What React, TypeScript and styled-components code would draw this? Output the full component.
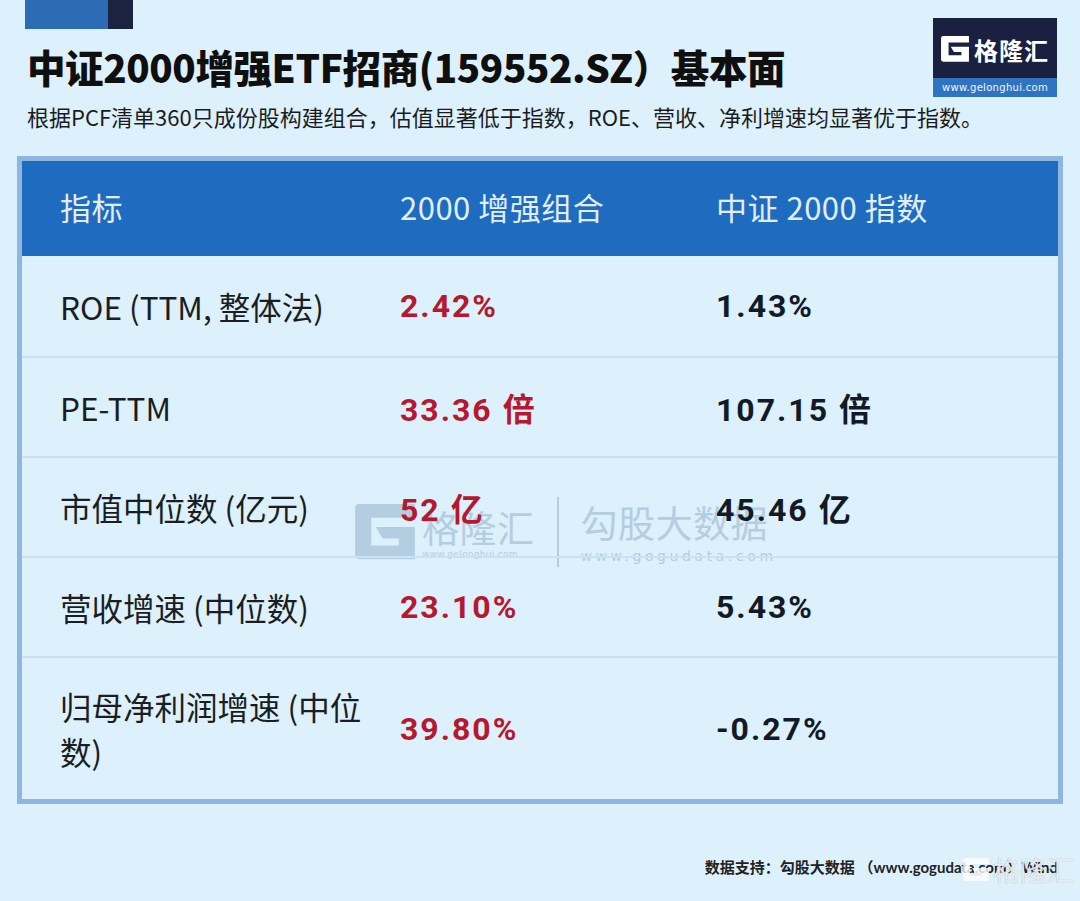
import styled, { createGlobalStyle } from 'styled-components'

type Row = {
  label: string
  ours: string
  index: string
}

const rows: Row[] = [
  { label: 'ROE (TTM, 整体法)', ours: '2.42%', index: '1.43%' },
  { label: 'PE-TTM', ours: '33.36 倍', index: '107.15 倍' },
  { label: '市值中位数 (亿元)', ours: '52 亿', index: '45.46 亿' },
  { label: '营收增速 (中位数)', ours: '23.10%', index: '5.43%' },
  { label: '归母净利润增速 (中位数)', ours: '39.80%', index: '-0.27%' },
]

const GlobalStyle = createGlobalStyle`
  html, body {
    margin: 0;
    padding: 0;
    background: #dcf1fc;
  }
  body {
    font-family: "Noto Sans CJK SC", "Noto Sans", sans-serif;
    color: #1a1a1a;
  }
  * {
    box-sizing: border-box;
  }
`

function GMark({ size, color }: { size: number; color: string }) {
  return (
    <svg width={size} height={size * 0.92} viewBox='0 0 26 24'>
      <path
        fill={color}
        d='M2 0 H26 V6 H7 V18 H19 V15 H12 L9 10 H26 V24 H2 Q0 24 0 22 V2 Q0 0 2 0 Z'
      />
    </svg>
  )
}

export default function App() {
  return (
    <Page>
      <GlobalStyle />
      <Header>
        <TitleBlock>
          <Deco>
            <DecoBlock $color='#2d6cb5' $width={83} />
            <DecoBlock $color='#1b2341' $width={25} />
          </Deco>
          <Title>中证2000增强ETF招商(159552.SZ）基本面</Title>
        </TitleBlock>
        <Logo>
          <LogoTop>
            <GMark size={28} color='#ffffff' />
            <span>格隆汇</span>
          </LogoTop>
          <LogoBar>www.gelonghui.com</LogoBar>
        </Logo>
        <Subtitle>
          根据PCF清单360只成份股构建组合，估值显著低于指数，ROE、营收、净利增速均显著优于指数。
        </Subtitle>
      </Header>

      <Table>
        <Watermark>
          <WmBrand>
            <GMark size={60} color='#a7c2d9' />
            <WmText>
              <span className='big'>格隆汇</span>
              <span className='small'>www.gelonghui.com</span>
            </WmText>
          </WmBrand>
          <WmDivider />
          <WmText>
            <span className='big'>勾股大数据</span>
            <span className='url'>www.gogudata.com</span>
          </WmText>
        </Watermark>

        <HeadRow>
          <HeadCell $first>指标</HeadCell>
          <HeadCell>2000 增强组合</HeadCell>
          <HeadCell>中证 2000 指数</HeadCell>
        </HeadRow>
        {rows.map((row, i) => (
          <BodyRow key={row.label} $tall={i === rows.length - 1} $first={i === 0}>
            <LabelCell>{row.label}</LabelCell>
            <ValueCell $tone='red'>{row.ours}</ValueCell>
            <ValueCell $tone='dark'>{row.index}</ValueCell>
          </BodyRow>
        ))}
      </Table>

      <Footer>
        <FootText>数据支持：勾股大数据 （www.gogudata.com）Wind</FootText>
        <CornerMark>
          <GMark size={26} color='rgba(255,255,255,0.8)' />
          <span>格隆汇</span>
        </CornerMark>
      </Footer>
    </Page>
  )
}

const Page = styled.div`
  position: relative;
  width: 1080px;
  height: 901px;
  overflow: hidden;
  background: #dcf1fc;
`

const Header = styled.header`
  display: grid;
  grid-template-columns: 1fr auto;
  padding: 0 23px 0 25px;
`

const TitleBlock = styled.div`
  display: flex;
  flex-direction: column;
`

const Deco = styled.div`
  display: flex;
  height: 29px;
`

const DecoBlock = styled.div<{ $color: string; $width: number }>`
  width: ${(p) => p.$width}px;
  background: ${(p) => p.$color};
`

const Title = styled.h1`
  margin: 10px 0 0 2px;
  font-size: 38.5px;
  line-height: 54px;
  font-weight: 900;
  letter-spacing: -0.4px;
  color: #0f0f0f;
`

const Logo = styled.div`
  margin-top: 18px;
  width: 124px;
  height: 79px;
  background: #1a2140;
  display: flex;
  flex-direction: column;
`

const LogoTop = styled.div`
  flex: 1;
  display: flex;
  align-items: center;
  justify-content: center;
  gap: 5px;
  padding-top: 2px;
  color: #ffffff;
  font-size: 24px;
  font-weight: 700;
  letter-spacing: 1px;
`

const LogoBar = styled.div`
  height: 19px;
  background: #2f74c0;
  color: #f2f6fb;
  font-family: "DejaVu Sans", sans-serif;
  font-size: 10px;
  line-height: 19px;
  text-align: center;
  letter-spacing: 0.3px;
`

const Subtitle = styled.p`
  grid-column: 1 / span 2;
  margin: 4px 0 0 2px;
  font-size: 22px;
  line-height: 30px;
  color: #1c1c1c;
`

const Table = styled.section`
  position: relative;
  margin: 25px 17px 0;
  border: 5px solid #8fb6e0;
`

const gridCols = `
  display: grid;
  grid-template-columns: 360px 316px 1fr;
  align-items: center;
`

const HeadRow = styled.div`
  ${gridCols}
  height: 95px;
  background: #1e6cbf;
`

const HeadCell = styled.div<{ $first?: boolean }>`
  padding-left: ${(p) => (p.$first ? 38 : 18)}px;
  padding-bottom: 4px;
  font-size: 31px;
  color: #e3edf8;
  letter-spacing: 0.5px;
`

const BodyRow = styled.div<{ $tall?: boolean; $first?: boolean }>`
  ${gridCols}
  position: relative;
  height: ${(p) => (p.$tall ? 143 : 100)}px;
  border-top: ${(p) => (p.$first ? 'none' : '2px solid #c9e2f3')};
`

const LabelCell = styled.div`
  padding: 0 0 0 38px;
  font-size: 31.5px;
  line-height: 45px;
  color: #1b1d22;
`

const ValueCell = styled.div<{ $tone: 'red' | 'dark' }>`
  padding-left: 18px;
  font-family: Roboto, "Noto Sans CJK SC", sans-serif;
  font-size: 32px;
  font-weight: 700;
  letter-spacing: 2px;
  color: ${(p) => (p.$tone === 'red' ? '#b5182f' : '#121a27')};
`

const Watermark = styled.div`
  position: absolute;
  left: 333px;
  top: 336px;
  display: flex;
  align-items: center;
  gap: 22px;
  opacity: 0.75;
  pointer-events: none;
`

const WmBrand = styled.div`
  display: flex;
  align-items: center;
  gap: 7px;
`

const WmText = styled.div`
  display: flex;
  flex-direction: column;
  color: #a7c2d9;
  & .big {
    font-size: 37px;
    line-height: 44px;
    letter-spacing: 0.5px;
  }
  & .small {
    font-size: 9px;
    font-family: "DejaVu Sans", sans-serif;
    letter-spacing: 0.3px;
  }
  & .url {
    font-size: 14px;
    font-family: "DejaVu Sans", sans-serif;
    letter-spacing: 3.6px;
    margin-top: 4px;
  }
`

const WmDivider = styled.div`
  width: 2px;
  height: 70px;
  background: #a7c2d9;
`

const Footer = styled.footer`
  position: relative;
  display: flex;
  justify-content: flex-end;
  padding: 52px 22px 0 0;
`

const FootText = styled.div`
  font-family: Lato, "Noto Sans CJK SC", sans-serif;
  font-size: 15px;
  font-weight: 700;
  color: #222222;
`

const CornerMark = styled.div`
  position: absolute;
  right: 6px;
  top: 46px;
  display: flex;
  align-items: center;
  gap: 4px;
  color: rgba(255, 255, 255, 0.8);
  font-size: 27px;
  text-shadow: 0 0 1px rgba(90, 110, 130, 0.6);
`
